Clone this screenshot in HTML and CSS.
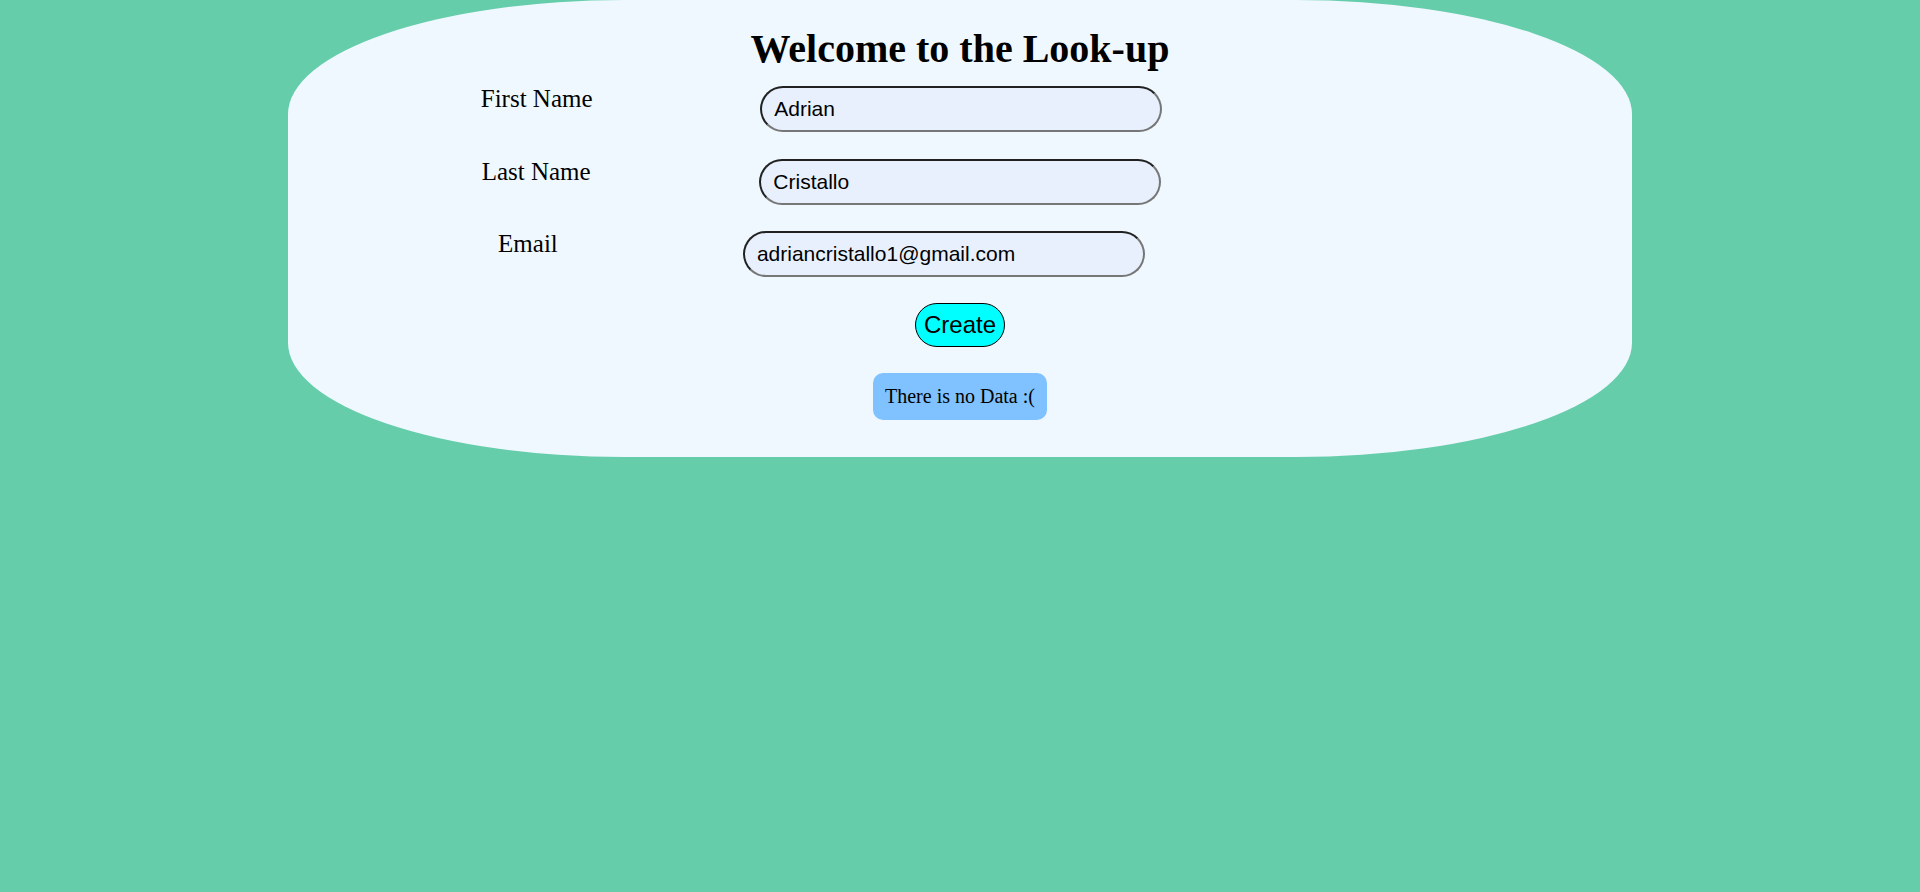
FILE: index.html
```html
<!DOCTYPE html>
<html lang="en">
<head>
<meta charset="utf-8">
<title>Look-up</title>
<link rel="stylesheet" href="styles.css">
</head>
<body>
  <div class="card">
    <h1 class="title">Welcome to the Look-up</h1>
    <form class="form">
      <div class="row">
        <label class="label" for="first">First Name</label>
        <input class="field" id="first" type="text" value="Adrian">
      </div>
      <div class="row">
        <label class="label" for="last">Last Name</label>
        <input class="field" id="last" type="text" value="Cristallo">
      </div>
      <div class="row">
        <label class="label" for="email">Email</label>
        <input class="field" id="email" type="email" value="adriancristallo1@gmail.com">
      </div>
      <div class="actions">
        <button class="create" type="button">Create</button>
        <div class="empty">There is no Data :(</div>
      </div>
    </form>
  </div>
</body>
</html>
```

FILE: styles.css
```css
html, body {
  margin: 0;
  padding: 0;
}

body {
  background: #66cdaa;
  font-family: "Liberation Serif", "Times New Roman", serif;
  color: #000;
}

.card {
  width: 70%;
  margin: 0 auto;
  background: #f0f8ff;
  border-radius: 25%;
  padding: 26px 0 37px;
  box-sizing: border-box;
}

.title {
  margin: 0 0 12px;
  font-family: "Liberation Serif", "Times New Roman", serif;
  font-size: 40px;
  font-weight: bold;
  line-height: 46px;
  text-align: center;
}

.form {
  margin: 0;
}

.row {
  display: flex;
  justify-content: space-evenly;
  align-items: flex-start;
  width: 1017px;
  margin: 0 0 24.5px 25px;
}

.label {
  font-size: 25px;
  line-height: 28.75px;
  padding-top: 1px;
}

.field {
  box-sizing: border-box;
  width: 402px;
  height: 46px;
  margin-top: 2px;
  padding: 0 12px;
  font-family: "Liberation Sans", Arial, sans-serif;
  font-size: 21px;
  color: #000;
  background: #e8f0fe;
  border: 2px inset #767676;
  border-radius: 23px;
  outline: none;
}

.actions {
  display: flex;
  flex-direction: column;
  align-items: center;
  padding-top: 1.5px;
}

.create {
  font-family: "Liberation Sans", Arial, sans-serif;
  font-size: 24px;
  line-height: 27.6px;
  padding: 7px 8px;
  background: #00ffff;
  color: #000;
  border: 1px solid #000;
  border-radius: 22px;
  margin: 0 0 26px;
}

.empty {
  font-size: 20px;
  line-height: 23px;
  padding: 12px;
  background: #80c1ff;
  border-radius: 10px;
}
```
